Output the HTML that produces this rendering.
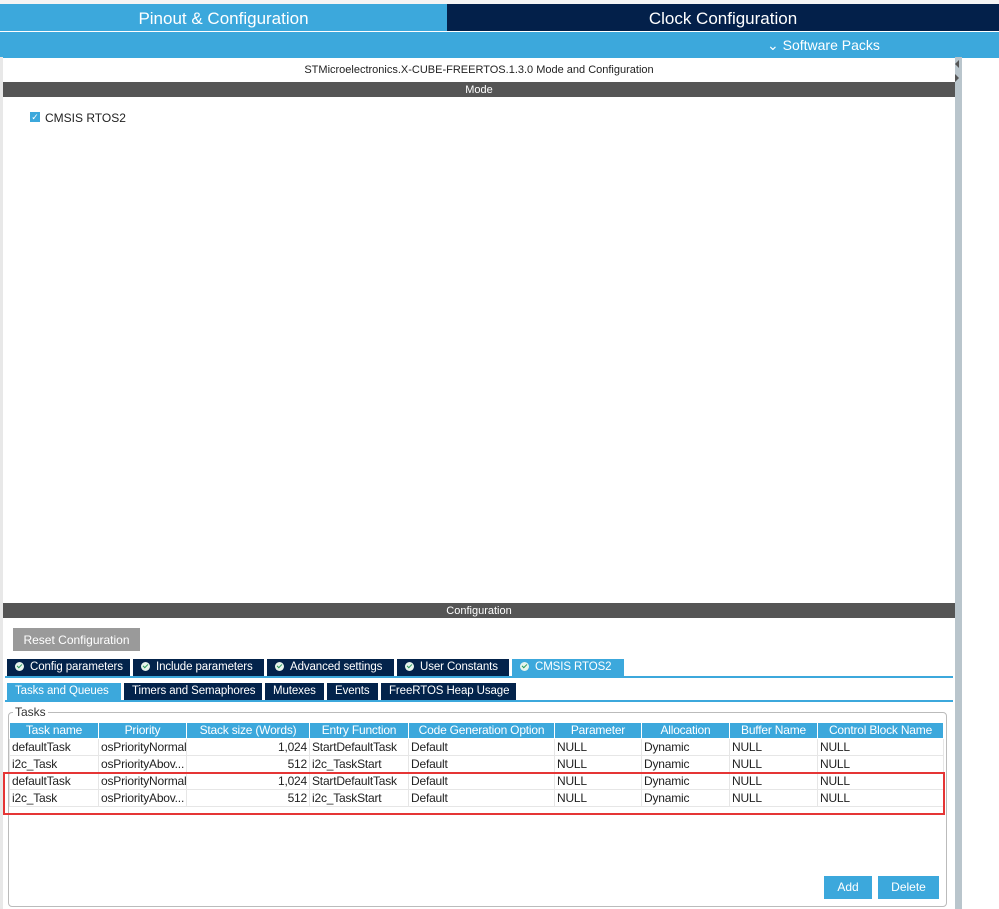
<!DOCTYPE html><html><head><style>
body{margin:0;width:999px;height:909px;background:#fff;font-family:"Liberation Sans",sans-serif;position:relative;overflow:hidden;font-size:12px;color:#222}
.a{position:absolute}
.hd{text-align:center;color:#fff}
.tab{position:absolute;height:17px;line-height:17px;color:#fff;background:#03234b;font-size:11.5px;padding:0 0 0 8px;box-sizing:border-box;white-space:nowrap;overflow:hidden;letter-spacing:-0.1px}
.tab.on{background:#3ca8dc}
.ck{display:inline-block;width:9px;height:9px;border-radius:50%;background:#e6f4ec;margin-right:6px;vertical-align:-1px;position:relative}
.ck:after{content:"";position:absolute;left:2px;top:2px;width:4px;height:2px;border-left:1.5px solid #2a9a5a;border-bottom:1.5px solid #2a9a5a;transform:rotate(-45deg)}
table{border-collapse:collapse;font-size:12px}
td{height:16px;line-height:16px;padding:0 2px;border:1px solid #e6e6e6;white-space:nowrap;overflow:hidden;letter-spacing:-0.2px}
th{background:#3ca8dc;color:#fff;font-weight:normal;height:15px;line-height:15px;border:1px solid #fff;padding:0;white-space:nowrap;overflow:hidden;letter-spacing:-0.2px}
</style></head><body>
<div class="a" style="left:0;top:0;width:999px;height:4px;background:#f4f4f4"></div>
<div class="a hd" style="left:0;top:4px;width:447px;height:27px;background:#3ca8dc;font-size:17px;line-height:29px">Pinout &amp; Configuration</div>
<div class="a hd" style="left:447px;top:4px;width:552px;height:27px;background:#03204a;font-size:17px;line-height:29px">Clock Configuration</div>
<div class="a" style="left:0;top:31px;width:999px;height:26px;background:#3ca8dc;border-top:1px solid #fff"></div>
<div class="a" style="left:767px;top:37px;color:#fff;font-size:14px">&#8964; Software Packs</div>
<div class="a" style="left:955px;top:57px;width:7px;height:852px;background:#b9c5cc"></div>
<div class="a" style="left:0;top:57px;width:3px;height:852px;background:#e8e8e8"></div>
<div class="a" style="left:955px;top:60px;width:0;height:0;border:4px solid transparent;border-right-color:#555;border-left:0"></div>
<div class="a" style="left:955px;top:74px;width:0;height:0;border:4px solid transparent;border-left-color:#555;border-right:0"></div>
<div class="a" style="left:3px;top:64px;width:952px;text-align:center;font-size:11px">STMicroelectronics.X-CUBE-FREERTOS.1.3.0 Mode and Configuration</div>
<div class="a hd" style="left:3px;top:82px;width:952px;height:15px;line-height:16px;background:#555;font-size:11px">Mode</div>
<div class="a" style="left:30px;top:112px;width:10px;height:10px;background:#3ca8dc;color:#fff;font-size:9px;line-height:10px;text-align:center">✓</div>
<div class="a" style="left:45px;top:111px;font-size:12px">CMSIS RTOS2</div>
<div class="a hd" style="left:3px;top:603px;width:952px;height:15px;line-height:16px;background:#555;font-size:11px">Configuration</div>
<div class="a hd" style="left:13px;top:628px;width:127px;height:23px;line-height:24px;background:#9a9a9a;font-size:12px">Reset Configuration</div>
<div class="tab" style="left:7px;top:659px;width:123px"><span class="ck"></span>Config parameters</div>
<div class="tab" style="left:133px;top:659px;width:131px"><span class="ck"></span>Include parameters</div>
<div class="tab" style="left:267px;top:659px;width:127px"><span class="ck"></span>Advanced settings</div>
<div class="tab" style="left:397px;top:659px;width:112px"><span class="ck"></span>User Constants</div>
<div class="tab on" style="left:512px;top:659px;width:112px"><span class="ck"></span>CMSIS RTOS2</div>
<div class="a" style="left:5px;top:676px;width:948px;height:2px;background:#3ca8dc"></div>
<div class="tab on" style="left:7px;top:683px;width:114px">Tasks and Queues</div>
<div class="tab" style="left:124px;top:683px;width:138px">Timers and Semaphores</div>
<div class="tab" style="left:265px;top:683px;width:59px">Mutexes</div>
<div class="tab" style="left:327px;top:683px;width:51px">Events</div>
<div class="tab" style="left:381px;top:683px;width:135px">FreeRTOS Heap Usage</div>
<div class="a" style="left:5px;top:700px;width:948px;height:2px;background:#3ca8dc"></div>
<div class="a" style="left:8px;top:712px;width:937px;height:193px;border:1px solid #bbb;border-radius:4px"></div>
<div class="a" style="left:13px;top:705px;background:#fff;padding:0 2px;font-size:12px;color:#333">Tasks</div>
<table class="a" style="left:9px;top:722px;width:935px;table-layout:fixed">
<colgroup><col style="width:89px"><col style="width:88px"><col style="width:123px"><col style="width:99px"><col style="width:146px"><col style="width:87px"><col style="width:88px"><col style="width:88px"><col></colgroup>
<tr><th>Task name</th><th>Priority</th><th>Stack size (Words)</th><th>Entry Function</th><th>Code Generation Option</th><th>Parameter</th><th>Allocation</th><th>Buffer Name</th><th>Control Block Name</th></tr>
<tr><td>defaultTask</td><td>osPriorityNormal</td><td style="text-align:right">1,024</td><td>StartDefaultTask</td><td>Default</td><td>NULL</td><td>Dynamic</td><td>NULL</td><td>NULL</td></tr>
<tr><td>i2c_Task</td><td>osPriorityAbov...</td><td style="text-align:right">512</td><td>i2c_TaskStart</td><td>Default</td><td>NULL</td><td>Dynamic</td><td>NULL</td><td>NULL</td></tr>
<tr><td>defaultTask</td><td>osPriorityNormal</td><td style="text-align:right">1,024</td><td>StartDefaultTask</td><td>Default</td><td>NULL</td><td>Dynamic</td><td>NULL</td><td>NULL</td></tr>
<tr><td>i2c_Task</td><td>osPriorityAbov...</td><td style="text-align:right">512</td><td>i2c_TaskStart</td><td>Default</td><td>NULL</td><td>Dynamic</td><td>NULL</td><td>NULL</td></tr>
</table>
<div class="a" style="left:3px;top:772px;width:938px;height:39px;border:2px solid #e53535"></div>
<div class="a hd" style="left:824px;top:876px;width:48px;height:23px;line-height:23px;background:#3ca8dc">Add</div>
<div class="a hd" style="left:878px;top:876px;width:61px;height:23px;line-height:23px;background:#3ca8dc">Delete</div>
</body></html>
